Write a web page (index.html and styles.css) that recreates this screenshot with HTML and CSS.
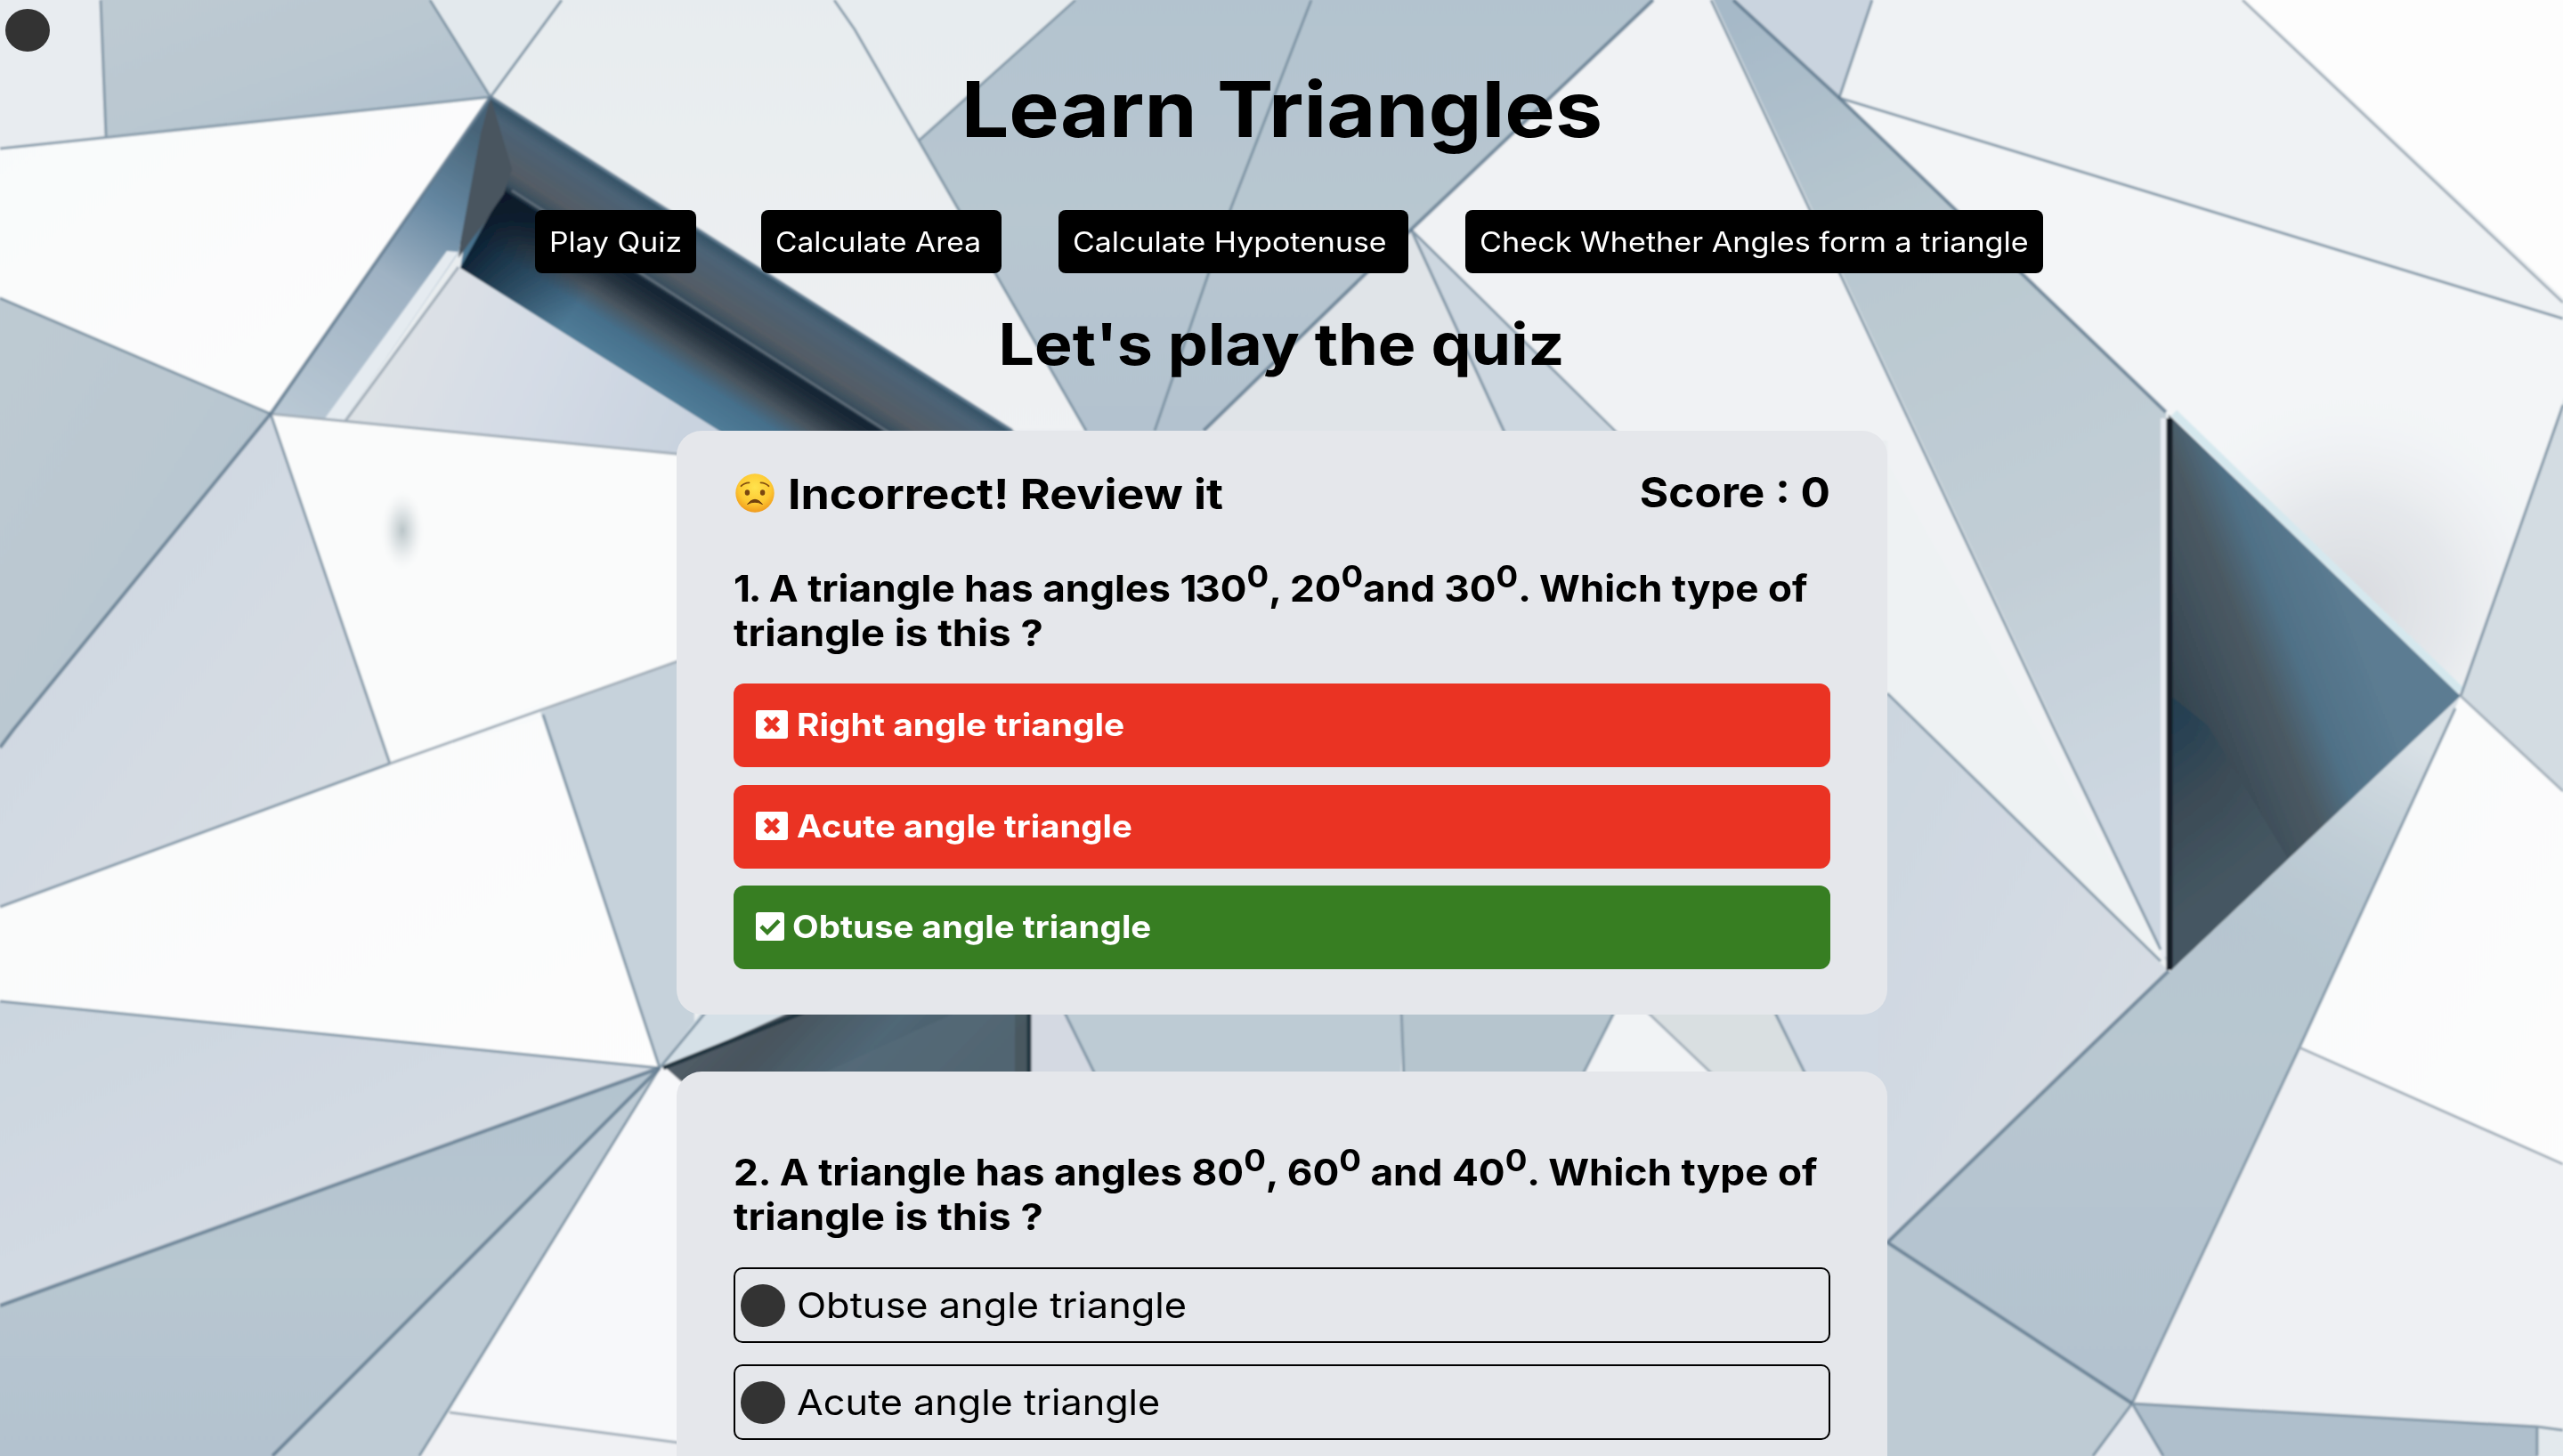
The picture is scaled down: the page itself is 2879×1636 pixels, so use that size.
FILE: index.html
```html
<!DOCTYPE html>
<html lang="en">
<head>
<meta charset="utf-8">
<title>Learn Triangles</title>
<link rel="stylesheet" href="styles.css">
</head>
<body>
<svg class="backdrop" viewBox="0 0 2879 1636" preserveAspectRatio="none" aria-hidden="true">
  <defs>
    <linearGradient id="white" x1="0" y1="0" x2="1" y2="1"><stop offset="0" stop-color="#f8fafb"/><stop offset="1" stop-color="#fdfdfd"/></linearGradient>
    <linearGradient id="pale" x1="0" y1="0" x2="0" y2="1"><stop offset="0" stop-color="#e7ecef"/><stop offset="1" stop-color="#eff1f3"/></linearGradient>
    <linearGradient id="mist" x1="0" y1="0" x2="1" y2="1"><stop offset="0" stop-color="#cbd6df"/><stop offset=".5" stop-color="#d3dae3"/><stop offset="1" stop-color="#dae0e4"/></linearGradient>
    <linearGradient id="steel" x1="0" y1="0" x2="1" y2="1"><stop offset="0" stop-color="#becad3"/><stop offset=".5" stop-color="#bac8d1"/><stop offset="1" stop-color="#b0c0ce"/></linearGradient>
    <linearGradient id="steel2" x1="0" y1="0" x2="0" y2="1"><stop offset="0" stop-color="#b3c3cf"/><stop offset=".5" stop-color="#b8c7d0"/><stop offset="1" stop-color="#b3c2cf"/></linearGradient>
    <linearGradient id="shard" gradientUnits="userSpaceOnUse" x1="2000" y1="0" x2="2400" y2="900"><stop offset="0" stop-color="#a6b9c8"/><stop offset=".3" stop-color="#b9c8d0"/><stop offset=".7" stop-color="#c2ced6"/><stop offset="1" stop-color="#cdd7e1"/></linearGradient>
    <linearGradient id="pit" gradientUnits="userSpaceOnUse" x1="800" y1="267" x2="703" y2="419"><stop offset="0" stop-color="#2f4f63"/><stop offset=".1" stop-color="#4c6376"/><stop offset=".33" stop-color="#545c65"/><stop offset=".41" stop-color="#3a4f5e"/><stop offset=".46" stop-color="#142433"/><stop offset=".56" stop-color="#26333f"/><stop offset=".68" stop-color="#4b5761"/><stop offset=".8" stop-color="#456f8b"/><stop offset="1" stop-color="#517d98"/></linearGradient>
    <linearGradient id="pitEnd" gradientUnits="userSpaceOnUse" x1="540" y1="240" x2="660" y2="330"><stop offset="0" stop-color="#061829"/><stop offset="1" stop-color="#061829" stop-opacity="0"/></linearGradient>
    <linearGradient id="wall" gradientUnits="userSpaceOnUse" x1="540" y1="150" x2="330" y2="470"><stop offset="0" stop-color="#476478"/><stop offset=".24" stop-color="#6486a0"/><stop offset=".5" stop-color="#9fb2c3"/><stop offset="1" stop-color="#b9c8d4"/></linearGradient>
    <linearGradient id="floor" gradientUnits="userSpaceOnUse" x1="420" y1="350" x2="760" y2="500"><stop offset="0" stop-color="#dfe3e6"/><stop offset=".5" stop-color="#d5dce6"/><stop offset="1" stop-color="#c9d3df"/></linearGradient>
    <linearGradient id="cut" gradientUnits="userSpaceOnUse" x1="2436" y1="760" x2="2640" y2="680"><stop offset="0" stop-color="#34444f"/><stop offset=".2" stop-color="#3f4f5a"/><stop offset=".45" stop-color="#4b5a64"/><stop offset=".65" stop-color="#507187"/><stop offset="1" stop-color="#5c7c92"/></linearGradient>
    <linearGradient id="cutLow" gradientUnits="userSpaceOnUse" x1="2450" y1="780" x2="2570" y2="940"><stop offset="0" stop-color="#143a53" stop-opacity=".5"/><stop offset=".5" stop-color="#3d4d58" stop-opacity=".8"/><stop offset="1" stop-color="#455762"/></linearGradient>
    <linearGradient id="gap" x1="0" y1="0" x2="1" y2=".2"><stop offset="0" stop-color="#5a6671"/><stop offset=".35" stop-color="#48545d"/><stop offset=".65" stop-color="#506776"/><stop offset="1" stop-color="#485961"/></linearGradient>
    <radialGradient id="fade" gradientUnits="userSpaceOnUse" cx="2640" cy="680" r="240"><stop offset="0" stop-color="#d8dade"/><stop offset=".5" stop-color="#e2e5e9" stop-opacity=".8"/><stop offset="1" stop-color="#f3f5f7" stop-opacity="0"/></radialGradient>
    <linearGradient id="tipFade" gradientUnits="userSpaceOnUse" x1="2700" y1="830" x2="2560" y2="1090"><stop offset="0" stop-color="#d9e1e6"/><stop offset="1" stop-color="#b8c7d1" stop-opacity="0"/></linearGradient>
    <radialGradient id="smudge"><stop offset="0" stop-color="#b9c4c7"/><stop offset=".5" stop-color="#dfe4e6" stop-opacity=".8"/><stop offset="1" stop-color="#fbfbfb" stop-opacity="0"/></radialGradient>
    <filter id="soft" x="-5%" y="-5%" width="110%" height="110%"><feGaussianBlur stdDeviation="1.3"/></filter>
  </defs>
  <g filter="url(#soft)">
    <path fill="url(#pale)" d="M-10-10H2890V1650H-10z"/>
    <path fill="#e8ecf0" d="M-10-10H113L119 153-10 168z"/>
    <path fill="url(#steel)" d="M113-10H478L551 109 119 153z"/>
    <path fill="#e3e9ed" d="M478-10H637L551 109z"/>
    <path fill="url(#white)" d="M-10 168 551 109 304 465-10 330z"/>
    <path fill="url(#steel)" d="M-10 330 304 465-10 850z"/>
    <path fill="url(#mist)" d="M304 465 438 858-10 1022V850z"/>
    <path fill="#fafbfb" d="M304 465 780 512V735L438 858z"/>
    <path fill="url(#white)" d="M438 858 612 805 741 1200-10 1124V1022z"/>
    <path fill="#f8fafb" d="M438 858 612 788V805z"/>
    <path fill="#c6d2db" d="M607 800 780 735V1160L741 1200z"/>
    <path fill="url(#mist)" d="M-10 1124 741 1200-10 1471z"/>
    <path fill="url(#steel2)" d="M-10 1471 741 1200 295 1650H-10z"/>
    <path fill="#bfccd6" d="M741 1200 464 1650H295z"/>
    <path fill="#f7f8fa" d="M741 1200 780 1195V1624L505 1587z"/>
    <path fill="#f0f1f4" d="M505 1587 780 1624V1650H464z"/>
    <ellipse cx="452" cy="596" rx="26" ry="48" fill="url(#smudge)"/>

    <path fill="url(#pale)" d="M637-10H932L1032 158 1220 483H1137L551 109z"/>
    <path fill="url(#steel2)" d="M1208 0 1215-10H1868L1585 257 1340 495H1225L1032 158z"/>
    <path fill="#e0e4e8" d="M1585 257 1692 495H1340z"/>
    <path fill="#cdd7e0" d="M1585 257 1692 495H1822z"/>
    <path fill="#f0f2f4" d="M1868-10H1920L2308 820 2427 1067 2120 779V495H1822L1585 257z"/>

    <path fill="url(#pit)" d="M551 109 1155 495H825L517 301z"/>
    <path fill="url(#pitEnd)" d="M566 214 700 300 690 408 517 301z"/>
    <path fill="#48545f" d="M551 109 575 190 566 218 515 290 530 150z"/>
    <path fill="url(#wall)" d="M551 109 540 150 515 284 386 473 304 465z"/>
    <path fill="#e5ebf0" d="M502 282 515 283 386 473 365 470z"/>
    <path fill="url(#floor)" d="M516 301 825 495 780 512 386 473z"/>
    <path class="dark-line" d="M575 214 1005 490"/>
    <path class="hair" d="M515 300 388 473"/>

    <path fill="#cad4df" d="M1947 0 1938-10H2107L2066 110z"/>
    <path fill="#eff2f4" d="M2107-10H2512L2879 340V358L2066 110z"/>
    <path fill="#fdfdfd" d="M2512-10H2890V345z"/>
    <path fill="#f3f5f7" d="M2066 110 2890 361V420L2764 782 2433 463z"/>
    <path fill="url(#fade)" d="M2066 110 2890 361V420L2764 782 2433 463z"/>
    <path fill="url(#shard)" d="M1920-10H1938L2066 110 2433 463V1080z"/>
    <path fill="#d3dce2" d="M2890 420V900L2764 782z"/>
    <path fill="url(#mist)" d="M2100 760 2436 1091 2100 1415z"/>
    <path fill="#eef2f3" d="M2120 779V520L2427 1067V1080z"/>
    <path fill="url(#cut)" d="M2436 466 2764 782 2438 1091z"/>
    <path fill="url(#cutLow)" d="M2436 780 2480 815 2570 965 2438 1091z"/>
    <path class="ice" d="M2442 464 2764 776"/>
    <path class="wall-edge" d="M2437 470V1090"/>
    <path class="wall-light" d="M2430 470V1075"/>
    <path fill="url(#steel2)" d="M2438 1091 2764 782 2583 1177 2395 1577 2120 1396z"/>
    <path fill="url(#tipFade)" d="M2438 1091 2764 782 2583 1177z"/>
    <path fill="url(#white)" d="M2764 782 2890 900V1312L2583 1177z"/>
    <path fill="#eef0f3" d="M2583 1177 2890 1312V1607L2395 1577z"/>
    <path fill="#becbd4" d="M2120 1396 2395 1577 2343 1650H2100V1396z"/>
    <path fill="#e4e8ee" d="M2395 1577 2436 1650H2343z"/>
    <path fill="#afbfcc" d="M2395 1577 2850 1603V1650H2436z"/>
    <path fill="#e3e9ed" d="M2850 1603 2890 1606V1650H2850z"/>

    <path fill="#d5e0e7" d="M741 1200 793 1130H930L770 1193z"/>
    <path fill="url(#gap)" d="M748 1200 903 1130H1157V1215H765z"/>
    <path fill="#566b79" d="M1090 1130H1140V1215H905z" opacity=".7"/>
    <path fill="#d4d9e2" d="M1159 1130H1192L1234 1215H1159z"/>
    <path fill="#bdcbd4" d="M1192 1130H1574V1215H1234z"/>
    <path fill="#b6c5ce" d="M1576 1130H1817L1774 1215H1576z"/>
    <path fill="#f1f3f5" d="M1817 1130H1843L1932 1215H1774z"/>
    <path fill="#d9dfe1" d="M1843 1130H1990L2032 1215H1932z"/>
    <path fill="#d0d9e3" d="M1990 1130H2110V1215H2032z"/>
    <path class="edge-dark" d="M745 1200 903 1137M1156 1130V1215"/>

    <path class="seam" d="M113 0 119 153M0 167 551 109M483 0 551 109 631 0M0 335 304 465M304 465 438 858M0 1019 438 858M0 1125 741 1200M610 803 741 1200M741 1200 471 1636M741 1200 793 1137M1208 0 1032 158M937 0 960 33 1032 158 1220 484M1473 0 1383 233 1297 484M1585 258 1692 490M1585 258 1820 490M2103 0 2066 110 2879 358M1922 0 2308 820 2427 1067M2120 779 2427 1080M2879 455 2764 782M2758 796 2583 1177 2395 1577M2351 1636 2395 1577 2430 1636M2395 1577 2850 1603 2879 1607M2850 1603V1636M1192 1130 1234 1215M1574 1130 1577 1215M1817 1130 1774 1215M1990 1130 2032 1215"/>
    <path class="hair" d="M438 858 770 740M505 1587 770 1622M2519 0 2879 340M2764 782 2879 889M2583 1177 2879 1308M1843 1130 1932 1215M304 465 770 511"/>
    <path class="seam strong" d="M304 465 15 820 0 840M304 465 551 109M741 1200 0 1467M741 1200 306 1636M1857 0 1585 258 1352 484M1947 0 2066 110 2433 463M2436 1091 2120 1396 2395 1577M551 109 1137 484"/>
  </g>
</svg>

<span class="radio radio-stray"></span>

<main class="page">
  <h1 class="title">Learn Triangles</h1>
  <nav class="menu">
    <a class="menu-link play"><span class="wide">Play Quiz</span></a>
    <a class="menu-link area"><span class="wide">Calculate Area</span></a>
    <a class="menu-link hypotenuse"><span class="wide">Calculate Hypotenuse</span></a>
    <a class="menu-link check"><span class="wide">Check Whether Angles form a triangle</span></a>
  </nav>
  <h2 class="subtitle">Let's play the quiz</h2>

  <section class="card">
    <header class="card-head">
      <svg class="face" viewBox="0 0 44 44" aria-hidden="true">
        <defs><radialGradient id="skin" cx=".5" cy=".35" r=".65"><stop offset="0" stop-color="#ffe34d"/><stop offset=".65" stop-color="#fdc832"/><stop offset="1" stop-color="#f09a1c"/></radialGradient></defs>
        <circle cx="22" cy="22" r="21.7" fill="url(#skin)"/>
        <ellipse cx="13.4" cy="21.5" rx="2.7" ry="3.3" fill="#7a4710"/>
        <ellipse cx="30.6" cy="21.5" rx="2.7" ry="3.3" fill="#7a4710"/>
        <path d="M6.500 14.200q3.400-3.600 9-3.800M37.500 14.200q-3.400-3.600-9-3.800" fill="none" stroke="#84500f" stroke-width="1.800" stroke-linecap="round"/>
        <path d="M13.500 34.500q8.500-10.500 17 0q-8.500-4.600-17 0z" fill="#70400e" stroke="#70400e" stroke-linejoin="round"/>
      </svg>
      <span class="wide verdict">Incorrect! Review it</span>
      <span class="wide score">Score : 0</span>
    </header>
    <h3 class="question"><span class="wide q1"><span class="one">1.</span> A triangle has angles <span class="one">1</span>30<sup>0</sup>, 20<sup>0</sup>and 30<sup>0</sup>. Which type of</span><br><span class="wide rest">triangle is this ?</span></h3>
    <ul class="answers">
      <li class="answer wrong">
        <svg class="mark" viewBox="0 0 36 32"><path fill="#fff" d="M3 0H33Q36 0 36 3V29Q36 32 33 32H3Q0 32 0 29V3Q0 0 3 0z"/><path class="cross" d="M11 9 25 23M25 9 11 23"/></svg>
        <span class="wide a-right">Right angle triangle</span>
      </li>
      <li class="answer wrong">
        <svg class="mark" viewBox="0 0 36 32"><path fill="#fff" d="M3 0H33Q36 0 36 3V29Q36 32 33 32H3Q0 32 0 29V3Q0 0 3 0z"/><path class="cross" d="M11 9 25 23M25 9 11 23"/></svg>
        <span class="wide a-acute">Acute angle triangle</span>
      </li>
      <li class="answer correct">
        <svg class="mark tick-mark" viewBox="0 0 32 32"><path fill="#fff" d="M3 0H29Q32 0 32 3V29Q32 32 29 32H3Q0 32 0 29V3Q0 0 3 0z"/><path class="tick" d="M6 15.800 13 22.800 26 9.500"/></svg>
        <span class="wide a-obtuse">Obtuse angle triangle</span>
      </li>
    </ul>
  </section>

  <section class="card card-open">
    <h3 class="question"><span class="wide q2">2. A triangle has angles 80<sup>0</sup>, 60<sup>0</sup> and 40<sup>0</sup>. Which type of</span><br><span class="wide rest">triangle is this ?</span></h3>
    <div class="choices">
      <label class="choice"><span class="radio"></span><span class="wide c-obtuse">Obtuse angle triangle</span></label>
      <label class="choice"><span class="radio"></span><span class="wide c-acute">Acute angle triangle</span></label>
    </div>
  </section>
</main>
</body>
</html>
```
FILE: styles.css
```css
* { box-sizing: border-box; }
body {
  margin: 0;
  height: 1636px;
  overflow: hidden;
  position: relative;
  font-family: Inter, "Open Sans", sans-serif;
  color: #000;
  background: #eff1f3;
}
.backdrop { position: absolute; inset: 0; width: 100%; height: 100%; }
.backdrop .seam { fill: none; stroke: #71889a; stroke-width: 3; stroke-opacity: .8; }
.backdrop .strong { stroke: #5b768b; stroke-width: 4; }
.backdrop .hair { fill: none; stroke: #a3afb9; stroke-width: 3; }
.backdrop .dark-line { fill: none; stroke: #5d6c78; stroke-width: 3; }
.backdrop .edge-dark { fill: none; stroke: #243640; stroke-width: 5; }
.backdrop .ice { fill: none; stroke: #d5e8ee; stroke-width: 9; }
.backdrop .wall-edge { fill: none; stroke: #151c25; stroke-width: 7; }
.backdrop .wall-light { fill: none; stroke: #e9edf3; stroke-width: 6; }

.radio { flex: none; width: 50px; height: 48px; border-radius: 50%; background: #333; }
.radio-stray { position: absolute; left: 6px; top: 10px; }

.page { position: relative; display: flex; flex-direction: column; align-items: center; height: 1636px; }
h1, h2, h3, ul { margin: 0; padding: 0; font-weight: 700; }
.title, .subtitle, .menu-link, .verdict, .score, .question, .answer, .choice { white-space: nowrap; }

/* Headings and labels are set slightly extended */
.wide { display: inline-block; transform-origin: left center; }

.title { height: 236px; padding-top: 70px; font-size: 87px; line-height: 106px; transform: scaleX(1.092); }
.menu { align-self: stretch; display: flex; height: 71px; padding-left: 601px; }
.menu-link {
  height: 71px; padding-left: 16px; border-radius: 8px;
  background: #000; color: #fff; font-size: 31px; line-height: 71px;
}
.play { width: 181px; margin-right: 73px; }
.area { width: 270px; margin-right: 64px; }
.hypotenuse { width: 393px; margin-right: 64px; }
.check { width: 649px; }
.play .wide { transform: scaleX(1.087); }
.area .wide { transform: scaleX(1.082); }
.hypotenuse .wide { transform: scaleX(1.094); }
.check .wide { transform: scaleX(1.103); }
.subtitle { height: 177px; padding-top: 40px; font-size: 65px; line-height: 80px; transform: scaleX(1.102); }

.card { flex: none; width: 1360px; height: 656px; padding: 42px 64px 0; border-radius: 28px; background: #e5e7eb; }
.card-head { display: flex; height: 56px; padding-left: 2px; align-items: center; font-size: 47px; font-weight: 700; line-height: 56px; }
.face { width: 44px; height: 44px; }
.verdict { margin: 2px 0 0 15px; transform: scaleX(1.104); }
.score { margin: -2px 0 0 auto; transform: scaleX(1.055); transform-origin: right center; }
.question { height: 100px; margin-top: 54px; font-size: 41px; line-height: 50px; }
.q1 { transform: scaleX(1.075); }
.q2 { transform: scaleX(1.078); }
.rest { transform: scaleX(1.105); }
.one { letter-spacing: -2px; }
.question sup { font-size: 34px; line-height: 0; position: relative; top: -16px; vertical-align: baseline; }
.answers { display: flex; flex-direction: column; gap: 19.5px; margin-top: 32px; list-style: none; }
.answer { display: flex; align-items: center; height: 94px; padding: 0 0 2px 25px; border-radius: 12px; color: #fff; font-size: 35px; }
.wrong { background: #ea3323; }
.correct { background: #377e22; }
.mark { width: 36px; height: 32px; margin-right: 10px; }
.tick-mark { width: 32px; margin-right: 9px; }
.cross { fill: none; stroke: #ea3323; stroke-width: 6; stroke-linecap: butt; }
.tick { fill: none; stroke: #377e22; stroke-width: 4.6; }
.a-right { transform: scaleX(1.11); }
.a-acute { transform: scaleX(1.097); }
.a-obtuse { transform: scaleX(1.1); }

.card-open { height: 432px; margin-top: 64px; padding-top: 88px; border-radius: 28px 28px 0 0; }
.card-open .question { margin-top: 0; }
.choices { display: flex; flex-direction: column; gap: 24px; margin-top: 32px; }
.choice { display: flex; align-items: center; gap: 13px; height: 85px; padding-left: 6px; border: 2px solid #000; border-radius: 10px; font-size: 40px; }
.c-obtuse { transform: scaleX(1.083); }
.c-acute { transform: scaleX(1.079); }
```
